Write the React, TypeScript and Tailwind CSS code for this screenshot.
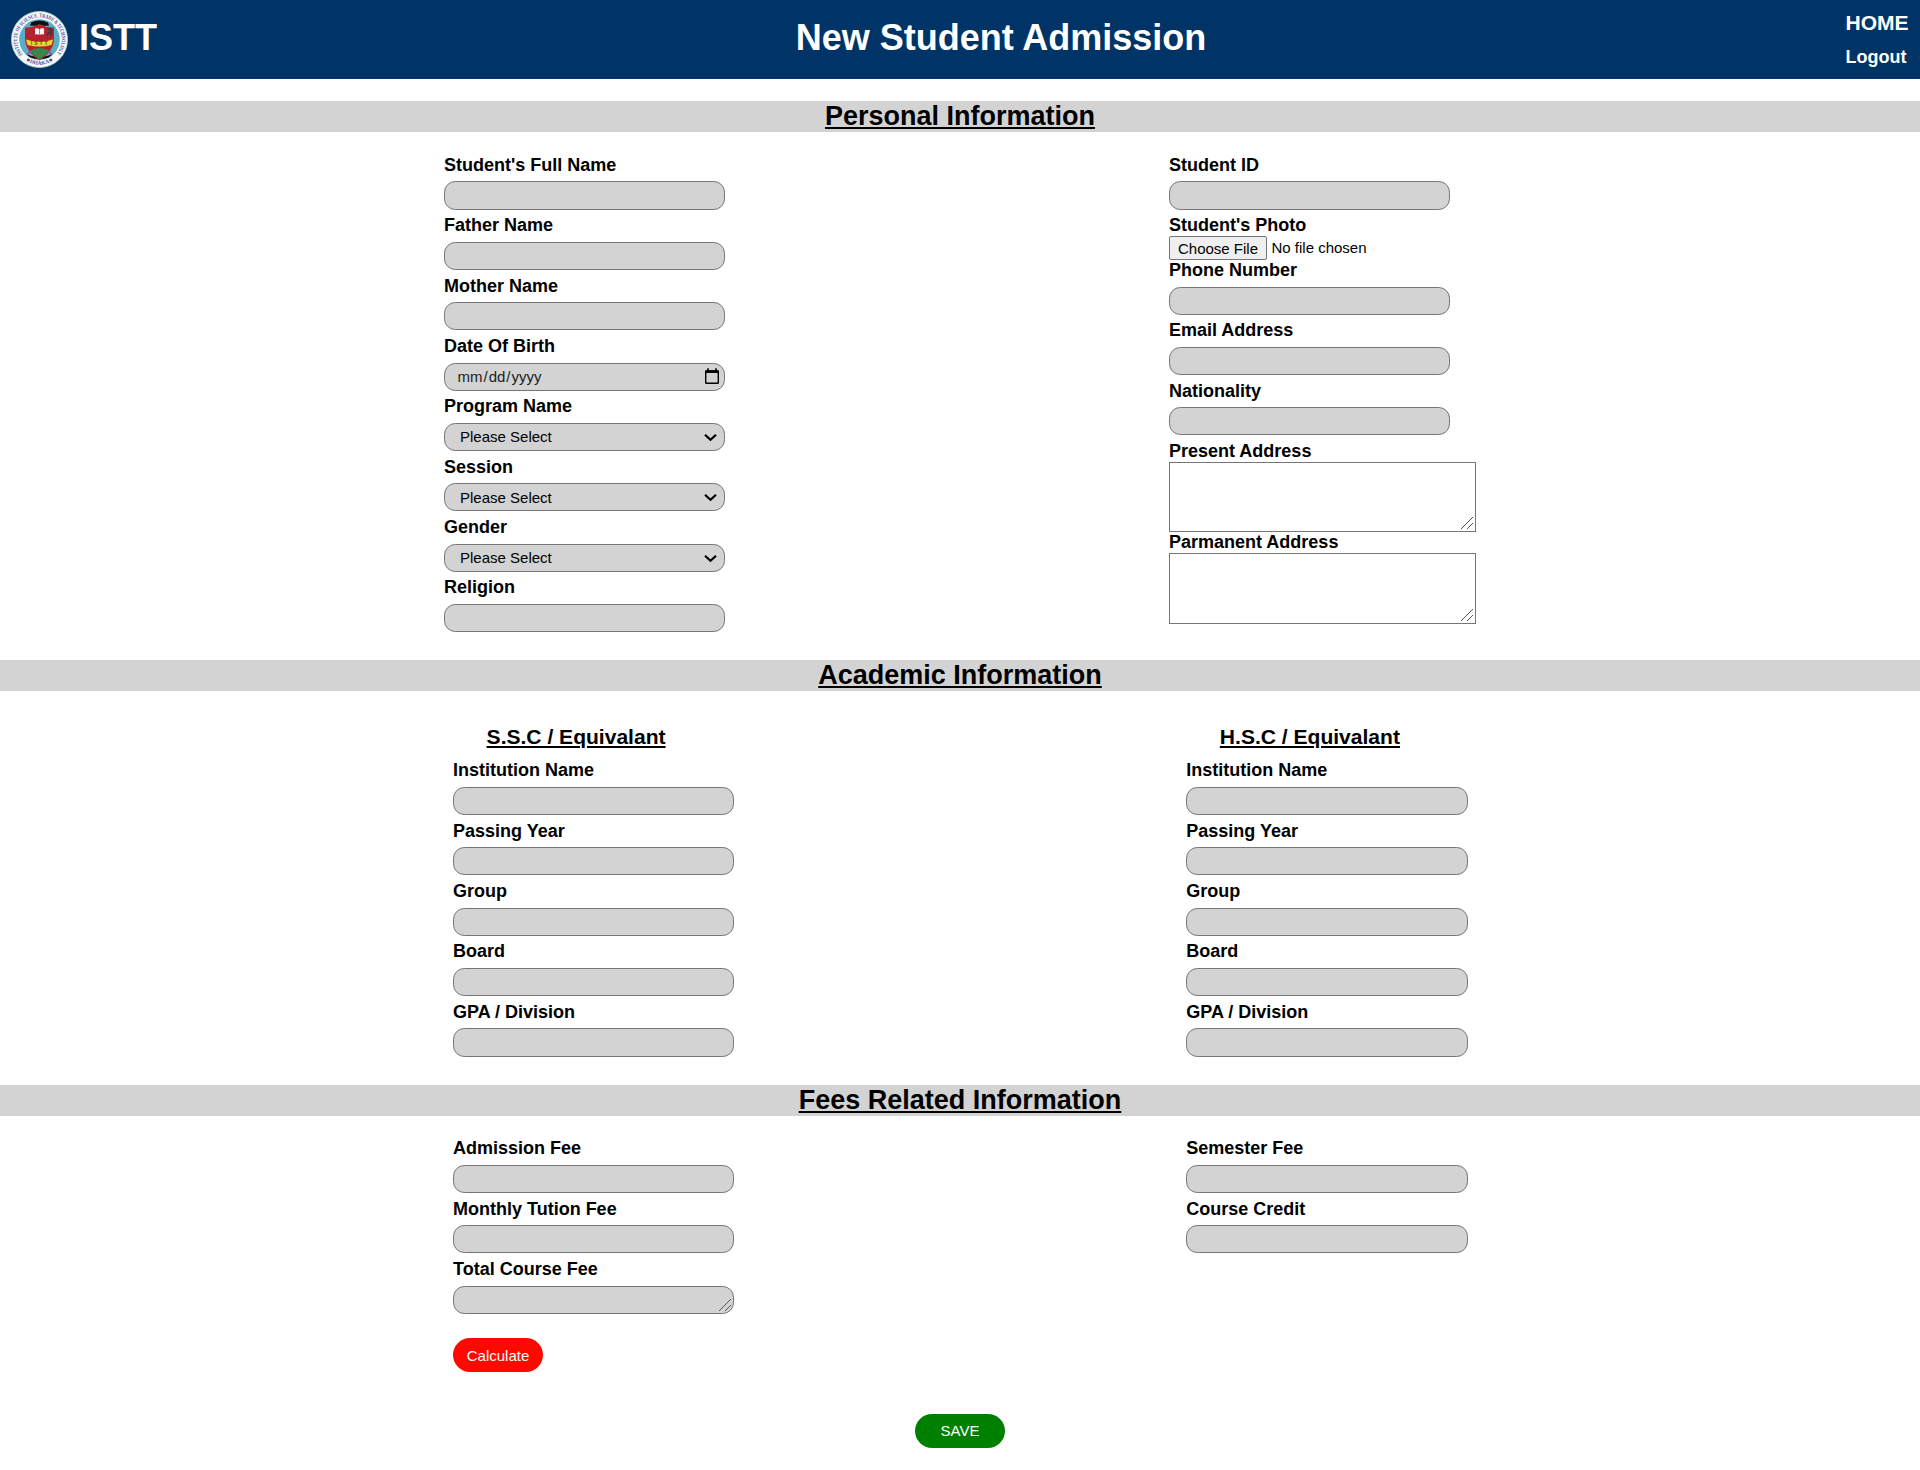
import React from "react";

const inputBox =
  "block h-[28.14px] w-[281.25px] rounded-[11.25px] border border-[#767676] bg-[#d3d3d3] text-[15px] text-black outline-none";

function Field({ label, children }: { label: string; children?: React.ReactNode }) {
  return (
    <div className="h-[60.375px]">
      <label className="block h-[26.59px] text-[18px] leading-5 font-bold">{label}</label>
      {children ?? <input type="text" aria-label={label} className={`${inputBox} px-3`} />}
    </div>
  );
}

function SelectField({ label }: { label: string }) {
  return (
    <Field label={label}>
      <div className="relative w-[281.25px]">
        <select aria-label={label} className={`${inputBox} appearance-none pt-px pr-8 pl-[15px]`}>
          <option>Please Select</option>
        </select>
        <svg
          className="pointer-events-none absolute top-[11px] right-[8px] h-[8px] w-[13px]"
          viewBox="0 0 13 8"
          fill="none"
          stroke="black"
          strokeWidth="2.2"
        >
          <path d="M1 0.8 L6.5 5.8 L12 0.8" />
        </svg>
      </div>
    </Field>
  );
}

function DateField({ label }: { label: string }) {
  return (
    <Field label={label}>
      <div className="flex h-[28.14px] w-[281.25px] items-center justify-between rounded-[11.25px] border border-[#767676] bg-[#d3d3d3] pr-[4px] pl-[11.5px] text-[15px] text-[#1c1c1c]">
        <div className="flex leading-[17px]">
          <span className="px-px">mm</span>
          <span>/</span>
          <span className="px-px">dd</span>
          <span>/</span>
          <span className="px-px">yyyy</span>
        </div>
        <svg className="mb-px h-[16px] w-[16px]" viewBox="0 0 16 16" fill="none">
          <rect x="1.7" y="2.9" width="12.6" height="12.3" rx="0.8" stroke="black" strokeWidth="1.4" />
          <path d="M1.2 2.4h13.6v2.6H1.2z" fill="black" />
          <path d="M4 0.3v2.5M12 0.3v2.5" stroke="black" strokeWidth="1.6" />
        </svg>
      </div>
    </Field>
  );
}

function ResizeGrip() {
  return (
    <svg
      className="pointer-events-none absolute right-[3px] bottom-[3px] h-3 w-3"
      viewBox="0 0 12 12"
      stroke="#555"
      strokeWidth="1"
    >
      <path d="M0 12 L12 0 M6 12 L12 6" />
    </svg>
  );
}

function AddressField({ label }: { label: string }) {
  return (
    <div className="h-[91.2px]">
      <label className="block h-[20.6px] text-[18px] leading-5 font-bold">{label}</label>
      <div className="relative w-[307px]">
        <textarea
          aria-label={label}
          className="block h-[70.7px] w-full resize-none rounded-none border border-[#767676] bg-white outline-none"
        />
        <ResizeGrip />
      </div>
    </div>
  );
}

function SectionBar({ children }: { children: React.ReactNode }) {
  return (
    <h2 className="h-[31px] bg-[#d3d3d3] text-center text-[27px] leading-[31px] font-bold underline">
      {children}
    </h2>
  );
}

function Crest() {
  return (
    <svg className="h-[57px] w-[57px] shrink-0" viewBox="0 0 57 57">
      <defs>
        <path id="ring-top" d="M12.5 43.9 A22.2 22.2 0 1 1 44.5 43.9" />
        <path id="ring-bottom" d="M17 51 A26 26 0 0 0 40 51" />
      </defs>
      <circle cx="28.5" cy="28.5" r="28" fill="#f6faf8" stroke="#b9d0cc" strokeWidth="0.9" />
      <circle cx="28.5" cy="28.5" r="20.3" fill="#58aec4" />
      <path d="M20 11.5 Q28.5 7.5 37 11.5 L38 14.8 H19z" fill="#0b1115" />
      <path d="M15 43 Q28.5 49 42 43 L38 46.5 Q28.5 50 19 46.5z" fill="#0b1115" />
      <path
        d="M14 16.5 Q21 17 28.5 13 Q36 17 43 16.5 V29 Q42 41 28.5 49.5 Q15 41 14 29z"
        fill="#b3222e"
      />
      <path d="M19 39.5 Q28.5 34.5 38 39.5 Q35 44.5 28.5 48.5 Q22 44.5 19 39.5z" fill="#35874a" />
      <path d="M16 43.5l4-3M41 43.5l-4-3" stroke="#a34c99" strokeWidth="2" />
      <path d="M24 17.5q2.3-.8 4.500.7q2.200-1.500 4.500-.7v6q-2.300-.8-4.500.6q-2.200-1.400-4.500-.6z" fill="#f5f3ef" />
      <path d="M28.5 18.2v6" stroke="#7c4046" strokeWidth="0.6" />
      <path d="M35.5 24.5l3-3.5M40 25v-8M36.5 17.5l5 2.500" stroke="#333a40" strokeWidth="1.5" />
      <path d="M15 28.5 Q28.5 33 42 28.5 L40.5 34 Q28.5 37 16.5 34z" fill="#e8d62e" />
      <text
        x="29.2"
        y="34.4"
        textAnchor="middle"
        fontSize="5"
        fontWeight="700"
        letterSpacing="2"
        fill="#4a5a22"
      >
        ISTT
      </text>
      <g fill="#4a4f9c" fontFamily="Liberation Serif, serif" fontWeight="700">
        <text fontSize="5.6">
          <textPath href="#ring-top" startOffset="1" textLength="100" lengthAdjust="spacingAndGlyphs">
            INSTITUTE OF SCIENCE, TRADE &amp; TECHNOLOGY
          </textPath>
        </text>
        <text fontSize="5.5">
          <textPath href="#ring-bottom" startOffset="50%" textAnchor="middle">
            DHAKA
          </textPath>
        </text>
        <circle cx="17.4" cy="49" r="1.6" />
        <circle cx="39.8" cy="49" r="1.6" />
      </g>
    </svg>
  );
}

const schoolFields = ["Institution Name", "Passing Year", "Group", "Board", "GPA / Division"];

function SchoolColumn({ title }: { title: string }) {
  return (
    <div className="w-[281.25px]">
      <h3 className="mb-[11.31px] ml-[33.6px] h-6 text-[21.06px] leading-6 font-bold underline">{title}</h3>
      {schoolFields.map((name) => (
        <Field key={name} label={name} />
      ))}
    </div>
  );
}

export default function App() {
  return (
    <div className="h-[1470px] overflow-hidden bg-white font-['Liberation_Sans',Arial,sans-serif] text-black">
      <header className="flex h-[79px] items-start justify-between bg-[#003366] pr-[10.5px] pl-[11px] font-bold text-white">
        <div className="flex w-[151px] gap-[11px] pt-[11px]">
          <Crest />
          <span className="mt-[6px] text-[36px] leading-[41px]">ISTT</span>
        </div>
        <h1 className="mt-[17px] mr-[5.5px] text-[36px] leading-[41px]">New Student Admission</h1>
        <nav className="flex w-16 flex-col pt-[11px]">
          <a className="text-[21.06px] leading-6">HOME</a>
          <a className="mt-[12px] text-[18px] leading-5">Logout</a>
        </nav>
      </header>

      <form onSubmit={(e) => e.preventDefault()}>
        <section className="pt-[22px]">
          <SectionBar>Personal Information</SectionBar>
          <div className="flex h-[528px] pt-[22.8px] pl-[444px]">
            <div className="mr-[443.75px] w-[281.25px]">
              <Field label="Student's Full Name" />
              <Field label="Father Name" />
              <Field label="Mother Name" />
              <DateField label="Date Of Birth" />
              <SelectField label="Program Name" />
              <SelectField label="Session" />
              <SelectField label="Gender" />
              <Field label="Religion" />
            </div>
            <div>
              <Field label="Student ID" />
              <div className="h-[44.82px]">
                <label className="block h-[20.8px] text-[18px] leading-5 font-bold">Student's Photo</label>
                <div className="flex items-start text-[15px]">
                  <button
                    type="button"
                    className="h-6 w-[98px] rounded-[2px] border border-[#767676] bg-[#efefef] pt-px leading-[21px]"
                  >
                    Choose File
                  </button>
                  <span className="ml-[4.5px] leading-6">No file chosen</span>
                </div>
              </div>
              <Field label="Phone Number" />
              <Field label="Email Address" />
              <Field label="Nationality" />
              <AddressField label="Present Address" />
              <AddressField label="Parmanent Address" />
            </div>
          </div>
        </section>

        <section>
          <SectionBar>Academic Information</SectionBar>
          <div className="flex h-[394px] gap-[452px] pt-[34px] pl-[453px]">
            <SchoolColumn title="S.S.C / Equivalant" />
            <SchoolColumn title="H.S.C / Equivalant" />
          </div>
        </section>

        <section>
          <SectionBar>Fees Related Information</SectionBar>
          <div className="flex h-[298px] gap-[452px] pt-[22.31px] pl-[453px]">
            <div className="w-[281.25px]">
              <Field label="Admission Fee" />
              <Field label="Monthly Tution Fee" />
              <Field label="Total Course Fee">
                <div className="relative w-[281.25px]">
                  <textarea
                    aria-label="Total Course Fee"
                    className={`${inputBox} resize-none overflow-hidden`}
                  />
                  <ResizeGrip />
                </div>
              </Field>
              <button
                type="button"
                className="mt-[18.5px] h-[34px] w-[90px] rounded-full bg-[#ff0800] text-[15px] leading-[35px] text-white"
              >
                Calculate
              </button>
            </div>
            <div className="w-[281.25px]">
              <Field label="Semester Fee" />
              <Field label="Course Credit" />
            </div>
          </div>
        </section>

        <div className="flex justify-center">
          <button type="submit" className="h-[34px] w-[90px] rounded-full bg-[#008000] text-[15px] leading-[34px] text-white">
            SAVE
          </button>
        </div>
      </form>
    </div>
  );
}
